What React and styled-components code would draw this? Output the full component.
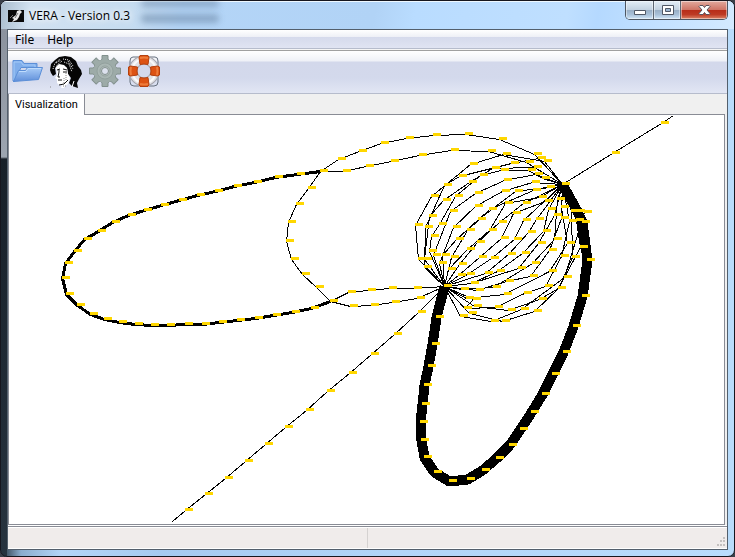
import React from "react";
import styled, { createGlobalStyle } from "styled-components";

const GlobalStyle = createGlobalStyle`
  *, *::before, *::after { box-sizing: border-box; }
  html, body, #root { height: 100%; margin: 0; }
  body {
    background: #3a3f49;
    font-family: "Open Sans", "Noto Sans", sans-serif;
    font-size: 12px;
    color: #000;
  }
`;

const Window = styled.main`
  display: flex;
  flex-direction: column;
  width: 100%;
  height: 100vh;
  padding: 0 6px 6px;
  border: 1px solid #16161e;
  border-radius: 7px;
  overflow: hidden;
  background:
    linear-gradient(90deg, #d9f0ff 0 1px, transparent 1px) 0 0 / 100% 28px no-repeat,
    linear-gradient(#d8e6f3 0, #8b929e 30px, #9da5b0 156px, #182029 158px, #27333f 100%) 0 0 / 6px 100% no-repeat,
    linear-gradient(90deg, #27333f 0, #8badce 20px, #b3d5f7 60px, #a6caf0 160px, #b2d5f8 400px, #b9dcfc 100%) 0 100% / 100% 6px no-repeat,
    #b9dcfb;
`;

const TitleBar = styled.header`
  position: relative;
  display: flex;
  flex: none;
  align-items: center;
  height: 28px;
  margin: 0 -6px;
  padding-left: 7px;
  border-top: 1px solid #eef8ff;
  background: linear-gradient(100deg, #a9bccd 0, #d2e2f1 30px, #c6dcf0 130px, #b4d5f7 180px, #b1d3f6 370px, #b9dcff 410px, #bfdfff 560px, #b5d9ff 590px, #d3eaff 100%);
`;

const GlassShadow = styled.span`
  position: absolute;
  top: ${(p) => p.$top}px;
  left: ${(p) => p.$left}px;
  width: ${(p) => p.$width}px;
  height: ${(p) => p.$height}px;
  border-radius: 4px;
  background: #708caa;
  opacity: 0.6;
  filter: blur(3px);
`;

const Title = styled.h1`
  position: relative;
  margin: 0 0 0 4px;
  font-size: 12px;
  font-weight: 400;
  line-height: 16px;
  text-shadow: 0 0 6px #fff, 0 0 8px #fff;
`;

const WindowButtons = styled.div`
  display: flex;
  align-self: flex-start;
  height: 19px;
  margin: -1px 6px 0 auto;
  border: 1px solid #4d5662;
  border-top: 0;
  border-radius: 0 0 5px 5px;
  overflow: hidden;
`;

const WindowButton = styled.button`
  display: grid;
  place-items: center;
  width: ${(p) => (p.$close ? 47 : 27)}px;
  padding: 0;
  border: 0;
  border-left: ${(p) => (p.$first ? "0" : "1px solid #5d6672")};
  background: ${(p) =>
    p.$close
      ? "linear-gradient(#e2aa9e 0, #cf7566 48%, #b72c18 50%, #bd3a24 75%, #dc8467 100%)"
      : "linear-gradient(#e3edf6 0, #c3d2e1 48%, #98aec5 50%, #a8c0d8 75%, #d0e5f7 100%)"};
  box-shadow: inset 0 0 0 1px rgba(255, 255, 255, 0.45);
`;

const Client = styled.div`
  display: flex;
  flex: 1;
  flex-direction: column;
  min-height: 0;
  border: 1px solid #535f6c;
  background: #f0f0f0;
`;

const MenuBar = styled.nav`
  display: flex;
  flex: none;
  height: 19px;
  border-bottom: 1px solid #b6bccc;
  background: linear-gradient(#fff 0, #eef0f6 38%, #d5daec 40%, #e0e4f2 100%);
`;

const MenuItem = styled.button`
  padding: 2px 7px 0;
  border: 0;
  background: none;
  color: #000;
  font: 12px/16px "Noto Sans", sans-serif;
  & + & { padding-left: 6px; }
`;

const ToolBar = styled.div`
  display: flex;
  flex: none;
  gap: 7px;
  height: 45px;
  padding: 5px 3px;
  border-top: 1px solid #f5f5f5;
  border-bottom: 1px solid #b6bccc;
  background: linear-gradient(#a0a0a0 0 1px, #fff 1px, #eff1f7 11px, #d3d8eb 12px, #d3d9ec 28px, #e2e6f4 100%);
`;

const ToolButton = styled.button`
  width: 32px;
  height: 34px;
  padding: 0;
  border: 0;
  background: none;
  svg { display: block; }
`;

const TabStrip = styled.div`
  display: flex;
  flex: none;
  height: 20px;
  background: #f0f0f0;
`;

const Tab = styled.button`
  position: relative;
  height: 21px;
  padding: 0 6px;
  border: 0;
  border-right: 1px solid #898c95;
  border-left: 1px solid #898c95;
  background: #fff;
  color: #000;
  font: 11px/20px Roboto, sans-serif;
`;

const Panel = styled.section`
  flex: 1;
  min-height: 0;
  margin-right: 2px;
  border: 1px solid #898c95;
  background: #fff;
`;

const Diagram = styled.svg`
  display: block;
  width: 100%;
  height: 100%;
  shape-rendering: crispEdges;
`;

const StatusBar = styled.footer`
  display: flex;
  flex: none;
  height: 24px;
  border: solid #fff;
  border-width: 1px 0;
  background: linear-gradient(#898c95 0 1px, #fff 1px 2px, #f0eceb 2px);
`;

const StatusCell = styled.div`
  display: flex;
  flex: 1;
  align-items: flex-end;
  justify-content: flex-end;
  margin-top: 2px;
  border-right: ${(p) => (p.$divider ? "1px solid #d5d2d1" : "0")};
`;

const Grip = styled.svg`
  margin: 0 1px 1px 0;
`;

/* Each point is the centre of a marker; the curve passes its lower left corner. */
const B = [448, 285];
const A = [566, 183];

const curves = [
  { width: 3, points: [[324,170],[301,173],[279,176],[258,181],[238,185],[219,190],[201,194],[183,199],[165,204],[148,209],[132,214],[116,221],[102,230],[88,238],[78,250],[69,262],[66,277],[70,293],[81,304],[94,313],[108,318],[123,321],[139,323],[155,324],[171,324],[189,323],[206,323],[223,321],[241,319],[259,317],[277,314],[296,311],[315,307],[334,300]] },
  { width: 1, points: [[324,170],[312,187],[300,203],[292,221],[290,240],[295,258],[306,273],[320,286],[334,300]] },
  { width: 1, points: [[324,170],[342,158],[363,150],[385,142],[410,137],[437,134],[469,133],[503,138],[538,153],A] },
  { width: 1, points: [[324,170],[347,170],[370,165],[395,160],[423,154],[455,149],[492,150],[530,161],A] },
  { width: 1, points: [[334,300],[352,291],[372,289],[393,287],[418,287],B] },
  { width: 1, points: [[334,300],[354,305],[375,304],[396,301],[421,297],B] },
  { width: 1, points: [B,[422,311],[398,333],[375,353],[353,372],[331,390],[310,409],[289,426],[269,443],[249,460],[229,477],[209,493],[189,509]], end: [172, 521] },
  { width: 1, points: [A,[616,152],[665,122]], end: [673, 115] },
  { width: 10, points: [B,[440,316],[436,343],[432,365],[428,384],[426,403],[424,421],[425,439],[428,456],[438,471],[453,480],[471,478],[486,469],[500,457],[513,444],[524,428],[535,411],[546,393],[556,373],[567,351],[577,325],[586,295],[591,259],[586,221],[581,210],A] },
  { width: 1, points: [B,[422,258],[419,224],[435,195],[474,163],[507,153],[548,160],A] },
  { width: 1, points: [B,[428,266],[429,226],[448,184],[463,175],[515,162],[542,157],A] },
  { width: 1, points: [B,[428,258],[433,215],[447,199],[473,181],[496,167],[538,166],A] },
  { width: 1, points: [B,[433,250],[435,235],[443,223],[459,195],[484,174],[505,169],[532,169],[546,177],A] },
  { width: 1, points: [B,[437,254],[454,210],[479,192],[508,179],[539,173],A] },
  { width: 1, points: [B,[443,262],[457,226],[479,205],[506,190],[536,181],A] },
  { width: 1, points: [B,[446,254],[460,238],[482,218],[519,190],[551,186],A] },
  { width: 1, points: [B,[455,256],[471,229],[493,208],[537,189],A] },
  { width: 1, points: [B,[452,268],[471,248],[493,229],[509,202],[543,196],A] },
  { width: 1, points: [B,[463,263],[481,241],[503,221],[527,202],A] },
  { width: 1, points: [B,[462,274],[483,256],[505,237],[517,212],[549,200],A] },
  { width: 1, points: [B,[471,273],[495,257],[518,238],[527,219],A] },
  { width: 1, points: [B,[489,272],[512,253],[532,231],[540,218],A] },
  { width: 1, points: [B,[475,282],[501,270],[526,252],[547,230],[552,208],A] },
  { width: 1, points: [B,[475,282],[522,267],[542,242],[558,214],A] },
  { width: 1, points: [B,[465,288],[497,286],[536,262],[558,238],[561,198],A] },
  { width: 1, points: [B,[480,289],[510,280],[534,275],[553,249],[565,217],A] },
  { width: 1, points: [B,[470,297],[508,293],[553,270],[571,242],[565,206],A] },
  { width: 1, points: [B,[477,298],[468,307],[499,306],[528,292],[549,285],[565,255],[573,220],A] },
  { width: 1, points: [B,[478,305],[512,309],[543,298],[562,287],[576,256],[575,210],A] },
  { width: 1, points: [B,[473,312],[506,320],[538,310],[562,287],[584,246],[580,219],A] },
  { width: 1, points: [B,[464,315],[495,320],[525,308],[568,276],[588,211]] },
];

const toPolyline = ({ points, end }) => {
  const path = points.map(([x, y]) => [x - 4, y + 1]);
  if (end) path.push(end);
  return path.map((p) => p.join(",")).join(" ");
};

function Visualization() {
  return (
    <Diagram viewBox="9 115 715 409" role="img" aria-label="Visualization of curves">
      <g fill="none" stroke="#000" strokeLinejoin="bevel">
        {curves.map((c, i) => (
          <polyline key={i} points={toPolyline(c)} strokeWidth={c.width} transform="translate(.5 .5)" />
        ))}
      </g>
      <g fill="#ffd700">
        {curves.flatMap((c, i) =>
          c.points.map(([x, y], j) => <rect key={`${i}-${j}`} x={x - 4} y={y - 1} width="8" height="3" />)
        )}
      </g>
    </Diagram>
  );
}

const AppIcon = () => (
  <svg width="17" height="14" viewBox="0 0 17 14" aria-hidden="true">
    <path fill="#090909" d="M0 1h16v12H0z" />
    <path fill="#e8e8e8" d="m9 2 3-1 2 2-2 2-1 3-2 3-5 2 2-3-2-1 4-3z" />
    <path stroke="#777" d="m10 4-3 5M2 9l3-3" />
  </svg>
);

const FolderIcon = () => (
  <svg width="32" height="32" viewBox="0 0 32 32" aria-hidden="true">
    <defs>
      <linearGradient id="folder" x2="0" y2="1">
        <stop stopColor="#a9cdf8" />
        <stop offset="1" stopColor="#608fda" />
      </linearGradient>
    </defs>
    <path d="M2 25V4.500h9l2 3h13v4H10L3 26z" fill="#80aeeb" stroke="#5c8fd7" />
    <path d="M3 24V6h7l2 3h12v2" fill="none" stroke="#a4caf8" />
    <path d="m2.500 25.500 5-11h7l2-3h15l-4 12z" fill="url(#folder)" stroke="#5c8fd7" />
    <path d="m8 15.500h7l2-3h13" fill="none" stroke="#c0dcfc" />
  </svg>
);

const PortraitIcon = () => (
  <svg width="32" height="32" viewBox="0 0 32 32" aria-hidden="true">
    <path fill="#050505" d="M0 14l1-6 4-4 4-3 6-1 6 1 5 4 2 5 3 4 1 4-3 5-2 4 1 5-6-2-3-3 2-5-3-4-1-6-4-3H8l-3 3 1 6-3 2-2-3z" />
    <path fill="#fff" d="M6 11l3-3 5 1 3 3 1 6 2 4-2 6-3 2-1 2h-3l1-3H9l-2-2v-4l-2-1 2-3z" />
    <path stroke="#f4f4f4" strokeDasharray="1 1" fill="none" d="M3 13l2-6 5-4M6 7l5-3M13 3l6 1 4 6M14 6l5 2 3 8M12 5l-6 5M18 5l5 8" />
    <path stroke="#111" fill="none" d="M7 14l3-1M13 13l4 1M8 15h2M13 16h4M9 16l-1 5h2M8 24h4M9 29l5-1 4-4" />
    <path stroke="#8b8b8b" strokeDasharray="1 1" d="M16 17v8M14 22v5M13 30h4M0 31h1" />
    <path stroke="#fff" d="M24 25l-2 6" />
  </svg>
);

const GearIcon = () => (
  <svg width="32" height="34" viewBox="0 0 32 34" aria-hidden="true">
    <g fill="#9daba8" stroke="#82908d">
      {[0, 45, 90, 135, 180, 225, 270, 315].map((a) => (
        <path key={a} transform={`rotate(${a} 16 16)`} d="M11 7l2-3V.500h6V4l2 3" />
      ))}
      <circle cx="16" cy="16" r="11.500" stroke="none" />
      <circle cx="16" cy="16" r="8" fill="#a9b6b3" stroke="#93a19e" />
      <circle cx="16" cy="16" r="5" fill="#b7c1bf" stroke="#93a19e" />
      <circle cx="16" cy="16" r="3.500" fill="#dce1ed" />
    </g>
  </svg>
);

const LifebuoyIcon = () => (
  <svg width="32" height="34" viewBox="0 0 32 34" aria-hidden="true">
    <path d="M11 2H5Q2 2 2 6v5M21 2h6q3 0 3 4v5M2 21v6q0 4 4 4h5M30 21v6q0 4-4 4h-5" fill="none" stroke="#66717f" />
    <circle cx="16" cy="16" r="11" fill="none" stroke="#a5a5ac" strokeWidth="9" />
    <circle cx="16" cy="16" r="11" fill="none" stroke="#e2e2e6" strokeWidth="7" />
    <circle cx="16" cy="16" r="12" fill="none" stroke="#fafafa" strokeWidth="2" />
    {[0, 90, 180, 270].map((a) => (
      <g key={a} transform={`rotate(${a} 16 16)`}>
        <path d="M12 .5h8l1 2-1 7q-4-1-8 0l-1-7z" fill="#dd5313" stroke="#b3400f" />
        <path d="M12 3q4-1 8 0" fill="none" stroke="#ee7c3b" strokeWidth="2" />
      </g>
    ))}
  </svg>
);

const tools = [
  { label: "Open", Icon: FolderIcon },
  { label: "Portrait", Icon: PortraitIcon },
  { label: "Settings", Icon: GearIcon },
  { label: "Support", Icon: LifebuoyIcon },
];

export default function App() {
  return (
    <>
      <GlobalStyle />
      <Window>
        <TitleBar>
          <GlassShadow $top={-2} $left={140} $width={78} $height={7} />
          <GlassShadow $top={12} $left={140} $width={78} $height={9} />
          <AppIcon />
          <Title>VERA - Version 0.3</Title>
          <WindowButtons>
            <WindowButton type="button" aria-label="Minimize" $first>
              <svg width="13" height="13" viewBox="0 0 13 13"><path d="M1.500 6.500h11v4h-11z" fill="#fff" stroke="#505866" /></svg>
            </WindowButton>
            <WindowButton type="button" aria-label="Maximize">
              <svg width="13" height="13" viewBox="0 0 13 13">
                <path d="M1.500 1.500h11v9h-11z" fill="#fff" stroke="#505866" />
                <path d="M4.500 4.500h5v3h-5z" fill="#9cb6d1" stroke="#505866" />
              </svg>
            </WindowButton>
            <WindowButton type="button" aria-label="Close" $close>
              <svg width="13" height="13" viewBox="0 0 13 13">
                <path d="M2 1.500h3l1.500 2 1.500-2h3l1 1L9 6l3 3.500-1 1H8l-1.500-2-1.500 2H2l-1-1L4 6 1 2.500z" fill="#fff" stroke="#59505a" />
              </svg>
            </WindowButton>
          </WindowButtons>
        </TitleBar>
        <Client>
          <MenuBar>
            <MenuItem type="button">File</MenuItem>
            <MenuItem type="button">Help</MenuItem>
          </MenuBar>
          <ToolBar role="toolbar">
            {tools.map(({ label, Icon }) => (
              <ToolButton key={label} type="button" aria-label={label}><Icon /></ToolButton>
            ))}
          </ToolBar>
          <TabStrip role="tablist">
            <Tab type="button" role="tab" aria-selected="true">Visualization</Tab>
          </TabStrip>
          <Panel role="tabpanel" aria-label="Visualization">
            <Visualization />
          </Panel>
          <StatusBar>
            <StatusCell $divider />
            <StatusCell>
              <Grip width="10" height="10" aria-hidden="true">
                <path d="M7 0h2v2H7zM4 3h2v2H4zM7 3h2v2H7zM1 7h2v2H1zM4 7h2v2H4zM7 7h2v2H7z" fill="#c4c0bf" />
              </Grip>
            </StatusCell>
          </StatusBar>
        </Client>
      </Window>
    </>
  );
}
